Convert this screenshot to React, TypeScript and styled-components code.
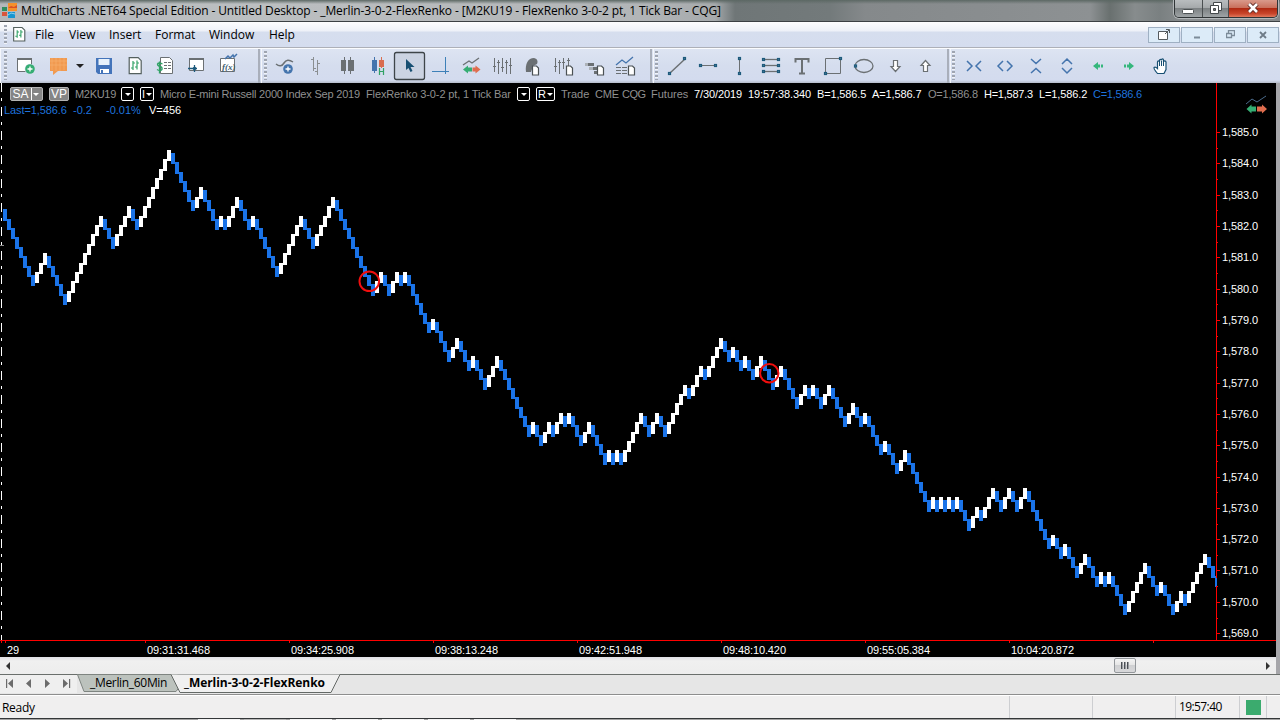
import React from 'react';
import styled, { createGlobalStyle, css } from 'styled-components';

const ui = "'Open Sans', 'Noto Sans', sans-serif";
const arial = "'Liberation Sans', Arial, sans-serif";

const Global = createGlobalStyle`
  * { box-sizing: border-box; }
  body { margin: 0; background: #e8e8e8; overflow: hidden; }
  svg { display: block; }
`;

const Window = styled.div`
  width: 1280px; height: 720px; display: flex; flex-direction: column;
  font-family: ${ui}; font-size: 12px; color: #000; overflow: hidden; white-space: nowrap;
`;

const TitleBar = styled.header`
  height: 22px; flex: none; display: flex; align-items: flex-start; justify-content: space-between;
  border-bottom: 1px solid #3c4043;
  background:
    linear-gradient(180deg, #5c6864 0, #5c686400 4px),
    linear-gradient(90deg, #b4b7ba 0, #bcbfc1 250px, #b2b5b7 640px, #a6aaac 715px, #6f7677 735px, #737a7b 830px, #85898b 865px, #8d9193 1090px, #69706f 1110px, #878c8d 1135px, #7a8081 1160px, #8c9092 1190px, #85898b 1280px);
`;
const TitleLeft = styled.div`display: flex; align-items: center; height: 21px; gap: 4px; padding-left: 1px;`;
const TitleText = styled.span`font-size: 12px; line-height: 20px; letter-spacing: -0.12px;`;
const WinButtons = styled.div`
  display: flex; height: 18px; width: 104px; margin-right: 2px; border: 1px solid #2f3436; border-top: 0;
  border-radius: 0 0 5px 5px; overflow: hidden; box-shadow: 0 0 0 1px #b3b7b9;
`;
const WinButton = styled.div<{ $w: number; $close?: boolean }>`
  width: ${p => p.$w}px; display: flex; align-items: center; justify-content: center; padding-bottom: 2px;
  border-right: 1px solid #4a4f51;
  background: ${p => p.$close
    ? 'linear-gradient(180deg,#d99a8b 0,#c9705c 45%,#b02a12 50%,#c8452a 80%,#e0785c 100%)'
    : 'linear-gradient(180deg,#b9bdbf 0,#a5a9ab 45%,#7c8183 50%,#9fa4a6 100%)'};
  &:last-child { border-right: 0; }
`;

const MenuBar = styled.nav`
  height: 26px; flex: none; display: flex; align-items: center;
  background: linear-gradient(180deg,#fdfdfe 0,#eef1f8 9px,#d6deee 10px,#d5ddef 100%);
  border-bottom: 1px solid #adb0b8; padding-left: 4px;
`;
const Grip = styled.i<{ $h: number }>`
  width: 3px; height: ${p => p.$h}px; flex: none;
  background: repeating-linear-gradient(180deg, #9fa5b1 0 2px, #f2f4f9 2px 3px, transparent 3px 4px);
`;
const MenuIcon = styled.div`margin: 0 9px 0 6px;`;
const MenuItem = styled.span<{ $w: number }>`width: ${p => p.$w}px; font-size: 12px; line-height: 24px; padding-top: 1px;`;
const MdiButtons = styled.div`margin-left: auto; display: flex; gap: 1px; padding-right: 1px;`;
const MdiButton = styled.div`
  width: 32px; height: 16px; border: 1px solid #9fb0c3; background: #dcebf8; display: flex;
  align-items: center; justify-content: center;
`;

const Toolbar = styled.div`
  height: 35px; flex: none; display: flex; border-top: 1px solid #fbfcfe;
  background: linear-gradient(180deg,#dde4f2 0,#d5ddee 50%,#d3dbee 92%,#b5bcc9 100%);
`;
const ToolGroup = styled.div<{ $w: number; $pad: number }>`
  width: ${p => p.$w}px; height: 34px; border-right: 2px solid #a9afbb; display: flex;
  padding: 2px 0 0 ${p => p.$pad}px; margin-right: 1px; border-left: 1px solid #f4f6fb;
  &:last-child { border-right: 0; flex: 1; margin: 0; }
`;
const ToolIcons = styled.svg`flex: none; overflow: visible; margin-top: -3px;`;

const Workspace = styled.main`height: 574px; flex: none; display: flex; background: #a6a6aa;`;
const Chart = styled.section`
  width: 1276px; height: 574px; background: #000; position: relative; overflow: hidden;
  font-family: ${arial}; font-size: 11px; color: #fff;
`;
const Plot = styled.svg`position: absolute; left: 0; top: 0; shape-rendering: crispEdges;`;
const StatusLine = styled.div<{ $left: number; $top?: number }>`
  position: relative; height: 16px; margin-top: ${p => p.$top ?? 0}px; padding-left: ${p => p.$left}px;
  display: flex; align-items: center;
`;
const Seg = styled.span<{ $w: number; $c: string; $s?: number }>`
  width: ${p => p.$w}px; flex: none; color: ${p => p.$c}; letter-spacing: ${p => p.$s ?? 0}px;
`;
const Chip = styled.span<{ $w: number; $gray?: boolean }>`
  width: ${p => p.$w}px; height: 14px; flex: none; border: 1px solid #fff; border-radius: 2px;
  margin-right: 6px; display: flex; align-items: center; justify-content: center; gap: 1px;
  font-size: 11px; line-height: 12px;
  ${p => p.$gray && css`background: #858585; border-color: #b4b4b4; font-size: 12px;`}
`;
const Caret = styled.i`border: 3px solid transparent; border-top-color: #fff; border-bottom: 0; flex: none;`;
const CaretBox = styled.span`border-left: 1px solid #fff; height: 12px; width: 10px; display: flex; align-items: center; justify-content: center; margin-left: 1px;`;

const HScroll = styled.div`height: 17px; flex: none; display: flex; align-items: center; background: #a6a6aa;`;
const Track = styled.div`
  width: 1276px; height: 17px; display: flex; align-items: center; padding: 0 6px;
  background: linear-gradient(180deg,#e0e0e6,#f0f0f0 4px,#ededed);
`;
const Thumb = styled.div`
  width: 22px; height: 15px; margin: 0 129px 0 auto; border: 1px solid #93979b; border-radius: 2px;
  background: linear-gradient(180deg,#f4f4f4,#e6e6e6 45%,#cfd0d2 50%,#d8d8da);
  display: flex; gap: 1px; justify-content: center; align-items: center;
`;
const Ridge = styled.i`width: 2px; height: 7px; background: linear-gradient(90deg,#4b4f55 50%,#9a9da2 50%);`;

const TabBar = styled.div`height: 21px; flex: none; background: #e6e6e6; border-top: 1px solid #6a6f6c; border-bottom: 1px solid #8e8e8e; display: flex;`;
const TabNav = styled.svg`width: 77px; height: 18px; background: #efefef;`;
const Tabs = styled.div`position: relative; width: 264px; height: 19px; display: flex; margin-top: -1px;`;
const TabShapes = styled.svg`position: absolute; left: 0; top: 0;`;
const TabLabel = styled.span<{ $w: number; $pl: number; $bold?: boolean }>`
  position: relative; width: ${p => p.$w}px; padding-left: ${p => p.$pl}px; font-size: 12px; line-height: 18px;
  font-weight: ${p => (p.$bold ? 700 : 400)}; letter-spacing: ${p => (p.$bold ? -0.05 : -0.32)}px;
`;
const StatusBar = styled.footer`
  height: 24px; flex: none; background: #f0efef; border-top: 1px solid #fff; border-bottom: 1px solid #333638;
  display: flex; align-items: stretch; font-size: 12px; line-height: 24px; padding-left: 2px;
`;
const Ready = styled.span`width: 1007px; letter-spacing: -0.3px;`;
const Pane = styled.div<{ $w: number }>`
  width: ${p => p.$w}px; border-left: 1px solid #cdced1; display: flex; align-items: center;
  padding-left: ${p => (p.$w === 27 ? 6 : 3)}px; letter-spacing: -0.6px;
`;
const Online = styled.i`width: 15px; height: 15px; background: #3bab6e;`;
const BottomEdge = styled.div`height: 1px; flex: none; background: #a3a3a3; display: flex; gap: 4px; padding-left: 198px;`;
const EdgeTile = styled.i<{ $dim?: boolean }>`width: 42px; height: 1px; background: ${p => (p.$dim ? '#b8b8b8' : '#f4f4f4')};`;

const priceY = (ticks: number) => Math.round(49 + ticks * 3.131);

/* Lengths of alternating falling / rising runs of bricks */
const runs = [8,3,5,9,3,4,2,8,6,2,4,1,1,3,3,1,6,6,3,5,10,2,2,2,1,1,6,1,4,2,3,1,3,3,8,1,2,2,1,2,1,1,3,2,4,1,1,1,1,5,2,2,2,5,1,3,1,4,2,1,2,1,2,2,3,2,4,2,1,1,2,2,4,2,2,1,4,1,3,2,6,1,1,1,1,1,1,1,3,2,1,3,2,2,2,2,6,1,2,1,3,2,3,1,1,1,4,5,3,1,3,2,1,5,3];

function bricks() {
  const out: { x: number; y: number; h: number; up: boolean }[] = [];
  let high = 25 - 3;
  runs.forEach((n, r) => {
    const up = r % 2 === 1;
    for (let k = 0; k < n; k++) {
      if (k === 0 && r > 0) high += up ? -1 : 1;
      else high += up ? -3 : 3;
      const y = priceY(high) - 1;
      out.push({ x: 3 + out.length * 4, y, h: priceY(high + 3) + 1 - y, up });
    }
  });
  return out;
}

const times = ['09:31:31.468', '09:34:25.908', '09:38:13.248', '09:42:51.948', '09:48:10.420', '09:55:05.384', '10:04:20.872'];
const menus: [string, number][] = [['File', 34], ['View', 40], ['Insert', 46], ['Format', 54], ['Window', 60], ['Help', 40]];

const g = '#6b7073';
const b = '#4474ad';
const n = '#1d5a7c';

const Page = ({ x, y }: { x: number; y: number }) => (
  <path d={`M${x} ${y}h4l2 2v7h-6z`} fill="#fff" stroke="#4b5154" strokeWidth="1.2" />
);
const Node = ({ x, y }: { x: number; y: number }) => (
  <rect x={x - 1} y={y - 1} width="2" height="2" fill="#fff" stroke={n} strokeWidth="1.2" />
);
const SheetBars = () => (
  <>
    <path d="M.7.7h9l3 3v13H.7z" fill="#fff" stroke="#54605e" strokeWidth="1.2" />
    <path d="M4.500 4v9M2.500 11h2M4.500 6h2M8.500 3.500v9M6.500 10h2M8.500 6h2" stroke="#31a266" fill="none" strokeWidth="1.2" />
  </>
);

const FileTools = () => (
  <ToolIcons width="250" height="34" viewBox="7 48 250 34" fill="none">
    <path d="M17.500 71.500v-13h14v13z" stroke={g} fill="#fff" />
    <path d="M17 59h15" stroke={g} strokeWidth="2" />
    <circle cx="30" cy="69" r="5.300" fill="#dbe3f1" /><circle cx="30" cy="69" r="4.800" fill="#35ad73" /><path d="M27.500 69h5M30 66.500v5" stroke="#fff" strokeWidth="1.300" />
    <path d="M50 58h17v13h-9l-5 4v-4h-3z" fill="#f19a50" /><path d="M52 58v12M56 58v13M60 58v13M64 58v12M50 61h17M50 65h17" stroke="#f6b06f" strokeWidth=".7" />
    <path d="M76 64h8l-4 4z" fill="#222" />
    <path d="M96 58h16v16h-14l-2-2z" fill="#4474ba" /><path d="M98.500 59h11v6h-11z" fill="#e9f2fb" /><path d="M100 69h9v4h-9z" fill="#fff" /><path d="M101 70h2v3h-2z" fill="#4474ba" />
    <g transform="translate(128.500 57)"><SheetBars /></g>
    <path d="M160.500 57.500h9l3 3v13h-12z" fill="#fff" stroke={g} /><path d="M164 62.500h3M168 62.500h3M164 65.500h3M168 65.500h3M164 68.500h3M168 68.500h3" stroke={g} />
    <path d="M162.500 64q-4-2-5 0 0 2 2.500 2.500t2 3q-2 2-5 0M159.500 61.500v12" stroke="#31a266" strokeWidth="1.300" />
    <path d="M189.500 59v11.500h14v-12z" fill="#fff" stroke={g} /><path d="M189 59h15" stroke={g} strokeWidth="2" /><path d="M188 68.500h9M194.500 65v7" stroke={n} strokeWidth="1.300" /><circle cx="194.500" cy="68.500" r="1.800" fill={n} />
    <path d="M220.500 58.500h14v13h-14z" fill="#fff" stroke={g} /><path d="M225 59l3-3 2 2 3-3 1 2 3-3" stroke={b} strokeWidth="1.500" />
    <text x="222" y="69.500" fontFamily="Liberation Serif" fontStyle="italic" fontWeight="700" fontSize="9" fill="#3f5d70">f(x)</text>
  </ToolIcons>
);

const ChartTools = () => (
  <ToolIcons width="380" height="34" viewBox="267 48 380 34" fill="none">
    <path d="M276 64q5 4 8-1t9-1" stroke={g} strokeWidth="1.500" />
    <circle cx="288" cy="69" r="4.800" fill={b} /><path d="M285.500 69h5M288 66.500v5" stroke="#fff" strokeWidth="1.300" />
    <path d="M313.500 57v14M311 59.500h2M314 68.500h2M317.500 60v15M315 71.500h2M318 63.500h2" stroke="#8a8e91" />
    <path d="M344.500 57v17M350.500 57v17" stroke={g} /><path d="M341 60h5v11h-5zM348 60h6v11h-6z" fill={g} />
    <path d="M374.500 57v16" stroke={b} /><path d="M372 60h5v11h-5z" fill={b} /><path d="M381.500 57v11" stroke="#d96d50" /><path d="M379 60h5v7h-5z" fill="#d96d50" /><path d="M379.500 68v7M383.500 68v7M379.500 71.500h4" stroke="#31a266" strokeWidth="1.200" />
    <rect x="394.500" y="52.500" width="30" height="27" rx="2" fill="#cbd3e2" stroke="#3e4549" strokeWidth="1.300" />
    <path d="M406 59v11l2.500-2 2 4 2-1-2-4h4z" fill="#174f72" />
    <path d="M432 71.500h17M445.500 57v17" stroke="#3d80b8" />
    <path d="M463 65l6-4 3 2 7-5" stroke={g} strokeWidth="1.300" /><path d="M463 69.500l5-4v2h4v4h-4v2z" fill="#35ad73" /><path d="M480.500 69.500l-5-4v2h-3v4h3v2z" fill="#df6d4e" />
    <path d="M494.500 58v14M493 66.500h3M498.500 60v14M497 62.500h3M502.500 58v14M501 67.500h3M506.500 60v14M505 62.500h3M510.500 58v16M509 65.500h3" stroke={g} />
    <path d="M526 72c-1-8 2-14 8-14 4 1 4 4 3 6l-4 2-2 6z" fill={g} /><Page x={532.5} y={66} />
    <path d="M555.500 58v14M554 66.500h3M559.500 60v14M558 62.500h3M563.500 58v11M562 62.500h3M568.500 58v8M567 60.500h3" stroke={g} /><Page x={566.5} y={66} />
    <path d="M588 63h6v3h-6z" fill={g} /><path d="M585 63h3v3h-3zM589 67h4v3h-4z" fill="#adb2b8" /><path d="M593 67h5v3h-5zM594 71h4v3h-4z" fill={g} /><Page x={597.5} y={66} />
    <path d="M616 65l6-5 4 3 7-6" stroke={b} strokeWidth="1.300" /><path d="M616 67.500h5M622 67.500h5M616 70.500h5M622 70.500h5M616 73.500h5M622 73.500h5" stroke={g} /><Page x={628.5} y={66} />
  </ToolIcons>
);

const DrawTools = () => (
  <ToolIcons width="285" height="34" viewBox="658 48 285 34" fill="none">
    <path d="M670 73l15-14" stroke={g} strokeWidth="1.500" /><Node x={669.5} y={73.5} /><Node x={684.5} y={58.5} />
    <path d="M702 65.500h13" stroke={g} /><Node x={700.5} y={65.5} /><Node x={715.5} y={65.5} />
    <path d="M739.500 60v12" stroke={g} /><Node x={739.5} y={58.5} /><Node x={739.5} y={73.5} />
    {[59.5, 65.5, 71.5].map(y => <g key={y}><path d={`M764 ${y}h14`} stroke={g} strokeWidth="1.300" /><Node x={763.5} y={y} /><Node x={778.5} y={y} /></g>)}
    <path d="M795.500 62.500v-3.500h13v3.500M802 59v14M799 73.500h6" stroke={g} strokeWidth="2" />
    <path d="M825.500 58.500h15v15h-15z" stroke={g} /><Node x={840.5} y={58.5} /><Node x={825.5} y={73.5} />
    <ellipse cx="864" cy="66" rx="9" ry="6.500" stroke={g} strokeWidth="1.300" /><Node x={855.5} y={66} />
    <path d="M893.500 60.500h4v6h2.500l-4.500 5-4.500-5h2.500zM923.500 71.500h4v-6h2.500l-4.500-5-4.500 5h2.500z" fill="#fff" stroke={g} strokeWidth="1.200" />
  </ToolIcons>
);

const ScaleTools = () => (
  <ToolIcons width="230" height="34" viewBox="955 48 230 34" fill="none">
    <path d="M967 61l5 5-5 5M981 61l-5 5 5 5M1003 61l-5 5 5 5M1007 61l5 5-5 5M1031 59l5 4.500 5-4.500M1031 73l5-4.500 5 4.500M1062 64l5-5 5 5M1062 68l5 5 5-5" stroke={b} strokeWidth="1.500" />
    <path d="M1093 66l5-4v2.500h2v3h-2V70zM1101 64.500h2v3h-2zM1134 66l-5-4v2.500h-2v3h2V70zM1124 64.500h2v3h-2z" fill="#35b77c" />
    <path d="M1157.500 73.500c-2-3-4-4-3.500-6 1-1 2.500 0 3.500 1v-6.500c0-1.500 2-1.500 2 0v-1.500c0-1.500 2-1.500 2 0v-.5c0-1.500 2-1.500 2 0v2c0-1.500 2.500-1.500 2.500 0v7.500l-2 4z" fill="#fff" stroke="#174f72" strokeWidth="1.200" /><path d="M1159.500 61v5M1161.500 61v5M1163.500 62v4" stroke="#174f72" />
  </ToolIcons>
);

const gray = '#909090';
const blue = '#1f73dc';

export default function App() {
  return (
    <Window>
      <Global />
      <TitleBar>
        <TitleLeft>
          <svg width="16" height="16"><path d="M7 0h9v8H7z" fill="#f4902b" /><path d="M1 4h5v4H1z" fill="#2f8d5e" /><path d="M1 9h5v4H1z" fill="#d9553b" /><path d="M7 9h7v6H7z" fill="#1795d0" /><path d="M7 5l3-2 3 1 3-2v3H7z" fill="#d84f25" /><path d="M7 12l3-2 4 1" stroke="#8ed0ec" fill="none" /></svg>
          <TitleText>MultiCharts .NET64 Special Edition - Untitled Desktop - _Merlin-3-0-2-FlexRenko - [M2KU19 - FlexRenko 3-0-2 pt, 1 Tick Bar - CQG]</TitleText>
        </TitleLeft>
        <WinButtons>
          <WinButton $w={28}><svg width="12" height="12"><rect x=".5" y="7.500" width="11" height="4" rx="1" fill="#fff" stroke="#4c5153" /></svg></WinButton>
          <WinButton $w={27}><svg width="12" height="12" fill="none"><path d="M3.500.5h8v8h-8z" fill="#fff" stroke="#44494b" /><path d="M.5 3.500h8v8h-8z" fill="#fff" stroke="#44494b" /><path d="M3.500 6.500h2v2h-2z" fill="#777" stroke="#44494b" /></svg></WinButton>
          <WinButton $w={48} $close><svg width="14" height="12"><path d="M3 2l8 8M11 2l-8 8" stroke="#5b2a25" strokeWidth="4.500" /><path d="M3 2l8 8M11 2l-8 8" stroke="#fff" strokeWidth="2.600" /></svg></WinButton>
        </WinButtons>
      </TitleBar>
      <MenuBar>
        <Grip $h={20} />
        <MenuIcon><svg width="13" height="15" viewBox="0 0 14 18" preserveAspectRatio="none"><SheetBars /></svg></MenuIcon>
        {menus.map(([t, w]) => <MenuItem key={t} $w={w}>{t}</MenuItem>)}
        <MdiButtons>
          <MdiButton><svg width="14" height="12" fill="none"><path d="M1.500 2.500h9v8h-9z" fill="#fff" stroke="#555b5f" /><path d="M8 5l4-4M9 .5h3.500V4" stroke="#555b5f" /></svg></MdiButton>
          <MdiButton><svg width="8" height="8"><path d="M1 6.500h6" stroke="#7c8b99" strokeWidth="2" /></svg></MdiButton>
          <MdiButton><svg width="9" height="9" fill="none" stroke="#7c8b99"><path d="M2.500 3V.5h6v5H6M.5 3.500h5v4h-5z" strokeWidth="1.300" /></svg></MdiButton>
          <MdiButton><svg width="8" height="8"><path d="M1 1l6 6M7 1L1 7" stroke="#6f7c88" strokeWidth="1.800" /></svg></MdiButton>
        </MdiButtons>
      </MenuBar>
      <Toolbar>
        <ToolGroup $w={260} $pad={3}><Grip $h={29} /><FileTools /></ToolGroup>
        <ToolGroup $w={391} $pad={2}><Grip $h={29} /><ChartTools /></ToolGroup>
        <ToolGroup $w={296} $pad={1}><Grip $h={29} /><DrawTools /></ToolGroup>
        <ToolGroup $w={300} $pad={1}><Grip $h={29} /><ScaleTools /></ToolGroup>
      </Toolbar>
      <Workspace>
        <Chart>
          <Plot width="1276" height="574">
            <path d="M1.500 0v557" stroke="#fff" strokeDasharray="9 6 3 6" />
            <path d="M0 162.500h4" stroke="#888" />
            {bricks().map(k => <rect key={k.x} x={k.x} y={k.y} width={Math.min(4, 1217 - k.x)} height={k.h} fill={k.up ? '#fff' : '#1a73e8'} />)}
            <g shapeRendering="auto" fill="none" stroke="#f00e0e" strokeWidth="2"><circle cx="369.300" cy="198.300" r="9.800" /><circle cx="769.300" cy="290.200" r="9.200" /></g>
            <path d="M1216.500 0v495M1216.500 503v54M0 557.500h1276M1.500 557v3" stroke="red" />
            {Array.from({ length: 17 }, (_, i) => <path key={i} d={`M1217 ${Math.round(49 + i * 31.32) + .5}h3`} stroke="red" />)}
            {Array.from({ length: 16 }, (_, i) => <path key={i} d={`M1217 ${Math.round(64.7 + i * 31.32) + .5}h1`} stroke="red" />)}
            {[5, 145, 289, 433, 577, 721, 865, 1009, 1153].map(x => <path key={x} d={`M${x + .5} 558v2`} stroke="red" />)}
            <g fill="#fff" fontSize="11" fontFamily={arial} shapeRendering="auto">
              {Array.from({ length: 17 }, (_, i) => <text key={i} x="1222" y={Math.round(53 + i * 31.32)} textLength="36">{`1,${585 - i}.0`}</text>)}
              <text x="7" y="571">29</text>
              {times.map((t, i) => <text key={t} x={147 + i * 144} y="571" textLength="63">{t}</text>)}
            </g>
            <g shapeRendering="auto"><path d="M1246 21l6-5 5 3 9-6" stroke="#4b6b8c" fill="none" /><path d="M1246.500 26l5-4.500v2h4.500v5h-4.500v2z" fill="#35ad73" /><path d="M1267 26l-5-4.500v2h-5v5h5v2z" fill="#df6d4e" /></g>
          </Plot>
          <StatusLine $left={10} $top={3}>
            <Chip $w={33} $gray>SA<CaretBox><Caret /></CaretBox></Chip>
            <Chip $w={20} $gray>VP</Chip>
            <Seg $w={46} $c={gray} $s={-0.3}>M2KU19</Seg>
            <Chip $w={13}><Caret /></Chip>
            <Chip $w={14}>I<Caret /></Chip>
            <Seg $w={206} $c={gray} $s={-0.2}>Micro E-mini Russell 2000 Index Sep 2019</Seg>
            <Seg $w={151} $c={gray} $s={-0.13}>FlexRenko 3-0-2 pt, 1 Tick Bar</Seg>
            <Chip $w={13}><Caret /></Chip>
            <Chip $w={19}>R<Caret /></Chip>
            <Seg $w={34} $c={gray}>Trade</Seg><Seg $w={27} $c={gray} $s={-0.2}>CME</Seg><Seg $w={29} $c={gray} $s={-0.5}>CQG</Seg><Seg $w={43} $c={gray}>Futures</Seg>
            <Seg $w={54} $c="#fff" $s={-0.1}>7/30/2019</Seg><Seg $w={69} $c="#fff" $s={-0.1}>19:57:38.340</Seg><Seg $w={55} $c="#fff" $s={-0.15}>B=1,586.5</Seg><Seg $w={56} $c="#fff" $s={-0.1}>A=1,586.7</Seg>
            <Seg $w={56} $c={gray} $s={-0.2}>O=1,586.8</Seg><Seg $w={55} $c="#fff" $s={-0.25}>H=1,587.3</Seg><Seg $w={54} $c="#fff" $s={-0.1}>L=1,586.2</Seg><Seg $w={55} $c={blue} $s={-0.25}>C=1,586.6</Seg>
          </StatusLine>
          <StatusLine $left={4}><Seg $w={69} $c={blue} $s={-0.1}>Last=1,586.6</Seg><Seg $w={33} $c={blue}>-0.2</Seg><Seg $w={43} $c={blue}>-0.01%</Seg><Seg $w={60} $c="#fff">V=456</Seg></StatusLine>
        </Chart>
      </Workspace>
      <HScroll>
        <Track>
          <svg width="5" height="8"><path d="M0 4l4-4v8z" fill="#333" /></svg>
          <Thumb><Ridge /><Ridge /><Ridge /></Thumb>
          <svg width="5" height="8"><path d="M5 4L1 0v8z" fill="#333" /></svg>
        </Track>
      </HScroll>
      <TabBar>
        <TabNav viewBox="0 0 77 18"><g fill="#6c6c6c"><path d="M6 4h1.200v9H6zM13 4v9L8 8.500zM31 4v9l-5-4.500zM45 4v9l5-4.500zM63 4v9l5-4.500zM69 4h1.200v9H69z" /></g></TabNav>
        <Tabs>
          <TabShapes width="270" height="20" fill="none"><path d="M.5.5L7 17.500h92l6-8-5-9z" fill="#bcc2bd" stroke="#7e8480" /><path d="M94 .5L103 18.500h151L263 .5" fill="#f0f0f0" stroke="#646966" /></TabShapes>
          <TabLabel $w={95} $pl={13}>_Merlin_60Min</TabLabel>
          <TabLabel $w={169} $pl={12} $bold>_Merlin-3-0-2-FlexRenko</TabLabel>
        </Tabs>
      </TabBar>
      <StatusBar>
        <Ready>Ready</Ready><Pane $w={83} /><Pane $w={83} /><Pane $w={64}>19:57:40</Pane><Pane $w={27}><Online /></Pane><Pane $w={13} />
      </StatusBar>
      <BottomEdge>
        <EdgeTile /><EdgeTile $dim /><EdgeTile /><EdgeTile /><EdgeTile /><EdgeTile /><EdgeTile />
      </BottomEdge>
    </Window>
  );
}
